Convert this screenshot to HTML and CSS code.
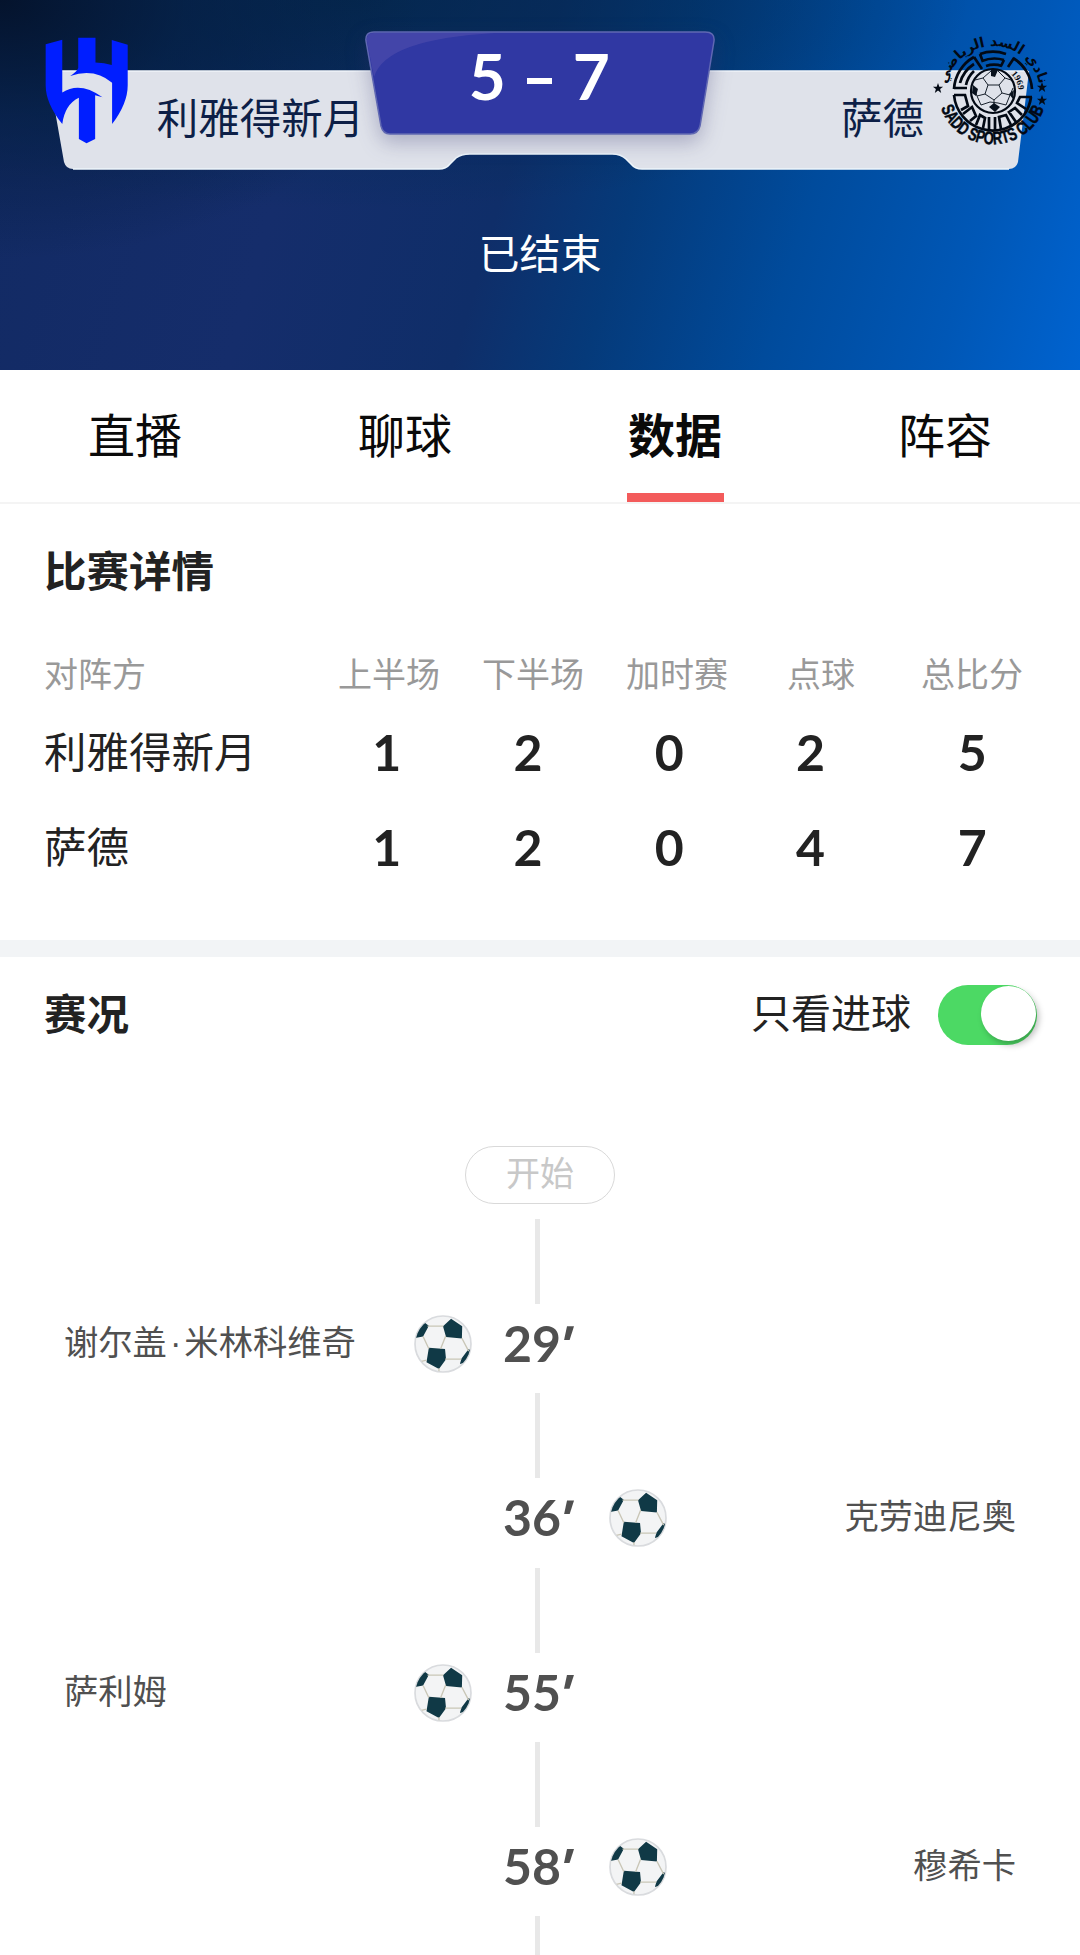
FILE: index.html
```
<!DOCTYPE html>
<html lang="zh-CN">
<head>
  <meta charset="utf-8" />
  <meta name="viewport" content="width=device-width, initial-scale=1" />
  <title>利雅得新月 5 - 7 萨德</title>
  <link rel="stylesheet" href="styles.css">
</head>
<body>
  <!-- shared football icon -->
  <svg class="defs" width="0" height="0">
    <defs>
      <clipPath id="ball-clip"><circle cx="128" cy="132" r="82" /></clipPath>
      <symbol id="ball" viewBox="42 46 172 172">
        <circle cx="128" cy="132" r="83" fill="#f3f4f5" stroke="#d9dbde" stroke-width="5" />
        <g clip-path="url(#ball-clip)">
          <path d="M70 66l16 12-17 32-24 4v-20z M152 57l33 22-1 37-47-5-9-32z M86 143l48 4 3 30-21 29-37-20z M204 147l8 6-10 32-24 6 5-16z" fill="#103946" />
          <path d="M82 79h47 M136 108l-15 38 M69 110l17 36 M184 115l20 38 M134 177h48 M116 204v16 M79 180l-18 4" fill="none" stroke="#c9c6b6" stroke-width="4" />
        </g>
      </symbol>
    </defs>
  </svg>

  <header class="hero">
    <div class="board">
      <svg class="board-bg" viewBox="0 0 980 106" width="980" height="106">
        <path d="M0 1H981L970 92Q968 99 961 99H594Q587 99 583 94L578 89Q573 84 564 84H422Q413 84 408 88L402 94Q398 99 391 99H25Q18 99 16 92Z" fill="#dfe2ea" />
        <path d="M961 99H594Q587 99 583 94L578 89Q573 84 564 84H422Q413 84 408 88L402 94Q398 99 391 99H25" fill="none" stroke="#eef6fc" stroke-width="1.5" />
        <path d="M0 1H980" stroke="#f0f5fa" stroke-width="1.5" />
      </svg>
      <svg class="crest" viewBox="45 50 252 322">
        <g fill="#001eff">
          <path d="M47 72L97 58V217Q150 182 218 231L196 225V357L170 370L147 357V233Q105 253 97 312Q47 250 47 195Z" />
          <path d="M145 52H197V127Q224 128 246 134V59L294 73V195Q294 250 247 312V188Q195 143 121 167Q143 152 145 143Z" />
        </g>
      </svg>
      <span class="team">利雅得新月</span>
      <div class="score">
        <svg class="score-bg" viewBox="0 0 350 104" width="350" height="104">
          <path d="M9 1H340Q350 1 349 10L335 95Q333 103 325 103H25Q18 103 16 95L1 10Q0 1 9 1Z" fill="#3038a3" stroke="#6068b2" stroke-width="1.5" />
          <path d="M9 2H130Q20 8 9 46L2 10Q1 2 9 2Z" fill="#4849aa" opacity=".8" />
        </svg>
        <b>5</b><i></i><b>7</b>
      </div>
      <span class="team away">萨德</span>
      <svg class="badge" viewBox="0 0 116 120">
        <defs>
          <path id="arc-top" d="M10 62A47 47 0 0 1 104 62" />
          <path id="arc-low" d="M4.500 76A55 55 0 0 0 108 78" />
          <path id="arc-year" d="M75 43A24 24 0 0 1 81 68" />
        </defs>
        <g fill="none" stroke="#020914" stroke-width="2.7">
          <circle cx="57" cy="60" r="22" stroke-width="2.2" />
          <!-- maze ring -->
          <path d="M18 58A39 39 0 0 1 38 26 M44 23A39 39 0 0 1 70 23 M77 27A39 39 0 0 1 96 58 M18 64A39 39 0 0 0 88 84 M95 66A39 39 0 0 1 88 84" />
          <path d="M24 52A33 33 0 0 1 38 33 M46 30A33 33 0 0 1 68 29 M30 54A27 27 0 0 1 38 40 M50 35A26 26 0 0 1 66 35 M18 57H31 M38 26L46 38 M68 29L65 35 M44 23L47 31 M78 27L72 36" />
          <path d="M18 64H29L32 75L25 79 M27 83L36 76L40 85L34 90 M40 94L44 84L49 87L47 97 M53 99V86 M59 99V86 M65 98L63 86L70 84L75 94 M80 91L73 81L79 77L86 84 M90 78L81 72L84 66H96" />
        </g>
        <g fill="none" stroke="#17202b" stroke-width="1">
          <path d="M52 54H63L66 62L58 69L49 63Z M52 54L47 47L55 40 M63 54L69 47L62 40 M66 62L74 64L77 57 M58 69V78 M49 63L41 65L38 57 M41 65L45 74 M74 64L70 74 M47 47L39 49 M69 47L75 49 M45 74L54 71L62 72L70 74" />
        </g>
        <path d="M55 39h7l-3 7-4-1z M37 54l5 4-2 7-4-3z M73 63l5-4-1 9z M53 76l5-4 6 4-5 5z" fill="#08111d" />
        <g fill="#020914">
          <text class="badge-ar"><textPath href="#arc-top" startOffset="50%">نادي السد الرياضي</textPath></text>
          <text class="badge-en"><textPath href="#arc-low" startOffset="1" textLength="134" lengthAdjust="spacingAndGlyphs">SADD SPORTS CLUB</textPath></text>
          <text class="badge-year"><textPath href="#arc-year">1969</textPath></text>
          <path id="star" d="M2 52l1.300 3.700h3.800l-3 2.400 1.100 3.800-3.200-2.300-3.200 2.300 1.100-3.800-3-2.400h3.800z" />
          <use href="#star" x="104" y="-1" />
          <use href="#star" x="104" y="12" />
        </g>
      </svg>
    </div>
    <p class="status">已结束</p>
  </header>

  <nav class="tabs">
    <a>直播</a>
    <a>聊球</a>
    <a class="active">数据</a>
    <a>阵容</a>
  </nav>

  <section class="detail">
    <h2>比赛详情</h2>
    <div class="row head">
      <span>对阵方</span><span>上半场</span><span>下半场</span><span>加时赛</span><span>点球</span><span>总比分</span>
    </div>
    <div class="row">
      <span>利雅得新月</span><b>1</b><b>2</b><b>0</b><b>2</b><b>5</b>
    </div>
    <div class="row">
      <span>萨德</span><b>1</b><b>2</b><b>0</b><b>4</b><b>7</b>
    </div>
  </section>

  <section class="events">
    <div class="events-head">
      <h2>赛况</h2>
      <span class="only-goals">只看进球</span>
      <span class="switch"></span>
    </div>
    <div class="timeline">
      <span class="start">开始</span>
      <span class="line"></span>
      <div class="event">
        <span class="name">谢尔盖<span class="dot">·</span>米林科维奇</span>
        <svg class="ball"><use href="#ball" /></svg>
        <b class="minute">29<i></i></b>
      </div>
      <span class="line"></span>
      <div class="event away">
        <b class="minute">36<i></i></b>
        <svg class="ball"><use href="#ball" /></svg>
        <span class="name">克劳迪尼奥</span>
      </div>
      <span class="line"></span>
      <div class="event">
        <span class="name">萨利姆</span>
        <svg class="ball"><use href="#ball" /></svg>
        <b class="minute">55<i></i></b>
      </div>
      <span class="line"></span>
      <div class="event away">
        <b class="minute">58<i></i></b>
        <svg class="ball"><use href="#ball" /></svg>
        <span class="name">穆希卡</span>
      </div>
      <span class="line"></span>
    </div>
  </section>
</body>
</html>
```
FILE: styles.css
```
* {
  box-sizing: border-box;
}
body {
  margin: 0;
  height: 1955px;
  overflow: hidden;
  background: #fff;
  color: #222;
  font-family: "Noto Sans CJK SC", sans-serif;
}
h2, p {
  margin: 0;
}
b, i {
  font-style: normal;
}
.defs {
  position: absolute;
}

/* hero */
.hero {
  height: 370px;
  padding-top: 31px;
  background:
    radial-gradient(ellipse 420px 260px at 0 0, rgba(4, 18, 42, 0.95) 0%, rgba(4, 28, 62, 0.6) 45%, rgba(4, 34, 74, 0) 100%),
    radial-gradient(ellipse 620px 210px at 350px 0, rgba(0, 38, 72, 0.8) 0%, rgba(0, 42, 84, 0.5) 50%, rgba(0, 48, 96, 0) 100%),
    linear-gradient(106deg, #122a63 0%, #152d6b 28%, #0f2e69 47%, #053a7a 58%, #004b9c 73%, #0057b6 88%, #0063d0 100%);
}
.board {
  position: relative;
  display: flex;
  height: 144px;
  padding: 0 28px 0 45px;
}
.board-bg {
  position: absolute;
  left: 48px;
  top: 39px;
  overflow: visible;
}
.crest {
  position: relative;
  width: 84px;
  height: 107px;
  margin-top: 6px;
}
.team {
  position: relative;
  width: 237px;
  padding-left: 28px;
  margin-top: 55px;
  font-size: 41.500px;
  line-height: 60px;
  color: #0d1f47;
  white-space: nowrap;
}
.team.away {
  width: 223px;
  padding: 0 12px 0 0;
  text-align: right;
}
.score {
  position: relative;
  display: flex;
  justify-content: center;
  gap: 21px;
  width: 350px;
  height: 104px;
  font-family: Lato, sans-serif;
  font-size: 64px;
  line-height: 90px;
  color: #fff;
}
.score-bg {
  position: absolute;
  left: 0;
  top: 0;
  filter: drop-shadow(0 8px 10px rgba(50, 50, 110, 0.3));
}
.score b {
  position: relative;
}
.score i {
  position: relative;
  width: 25px;
  height: 6px;
  margin-top: 47px;
  background: #fff;
}
.badge {
  position: relative;
  width: 116px;
  height: 120px;
  overflow: visible;
}
.badge-ar {
  font: bold 14px "DejaVu Sans", sans-serif;
  text-anchor: middle;
}
.badge-en {
  font: bold 18px "Liberation Sans Narrow", "Liberation Sans", sans-serif;
  stroke: #020914;
  stroke-width: 0.5px;
}
.badge-year {
  font: bold 9px "Liberation Serif", serif;
}
.status {
  margin-top: 46px;
  text-align: center;
  font-size: 41px;
  line-height: 60px;
  color: #fff;
}

/* tabs */
.tabs {
  display: grid;
  grid-template-columns: repeat(4, 1fr);
  justify-items: center;
  height: 134px;
  border-bottom: 2px solid #f4f4f4;
  font-size: 47px;
  line-height: 126px;
  color: #0a0a0a;
}
.tabs a {
  height: 132px;
}
.tabs .active {
  width: 97px;
  text-align: center;
  font-weight: bold;
  border-bottom: 9px solid #f35b5b;
}

/* score table */
.detail {
  height: 453px;
  padding: 34px 0 0 44px;
  border-bottom: 17px solid #f2f4f6;
}
h2 {
  font-size: 42.500px;
  line-height: 62px;
}
.row {
  display: grid;
  grid-template-columns: 272px repeat(4, 141.300px) 182px;
  text-align: center;
  font-size: 42.500px;
  line-height: 95px;
}
.row span:first-child {
  text-align: left;
}
.row:not(.head) span {
  margin-top: -3px;
}
.row.head {
  grid-template-columns: 273px repeat(4, 144px) 158px;
  margin-top: 48px;
  font-size: 34px;
  line-height: 50px;
  color: #999;
  margin-bottom: 7px;
}
.row b {
  height: 95px;
  font-family: Lato, sans-serif;
  font-size: 50px;
}

/* events */
.events-head {
  display: flex;
  align-items: center;
  height: 117px;
  padding: 0 43px 2px 44px;
}
.events-head h2 {
  margin-top: -5px;
}
.only-goals {
  margin: -8px 27px 0 auto;
  font-size: 40px;
}
.switch {
  width: 99px;
  height: 60px;
  padding: 1px 1px;
  border-radius: 30px;
  background: #4cd964;
}
.switch::after {
  content: "";
  display: block;
  width: 55px;
  height: 55px;
  margin-left: auto;
  border-radius: 50%;
  background: #fff;
  box-shadow: 3px 4px 6px rgba(0, 0, 0, 0.25);
}
.timeline {
  display: flex;
  flex-direction: column;
  align-items: center;
  padding-top: 72px;
}
.start {
  width: 150px;
  height: 58px;
  margin-bottom: 15px;
  border: 1.500px solid #d9d9d9;
  border-radius: 29px;
  text-align: center;
  font-size: 34px;
  line-height: 50px;
  color: #c8c8c8;
}
.line {
  flex: none;
  width: 5px;
  height: 85px;
  margin-right: 5px;
  background: #e8e8e8;
}
.event {
  display: flex;
  align-items: center;
  align-self: stretch;
  height: 89.300px;
  padding: 0 499px 9px 64px;
}
.event.away {
  padding: 0 64px 9px 503px;
}
.name {
  flex: 1;
  margin-top: -8px;
  font-family: "Liberation Sans", "Noto Sans CJK SC", sans-serif;
  font-size: 34.300px;
  color: #505050;
  white-space: nowrap;
}
.name .dot {
  margin: 0 3px;
}
.away .name {
  text-align: right;
}
.ball {
  width: 58px;
  height: 58px;
  margin-right: 31px;
}
.away .ball {
  margin: 0 0 0 28px;
}
.minute {
  display: flex;
  width: 78px;
  margin-top: -2px;
  font-family: Lato, sans-serif;
  font-size: 50px;
  color: #505050;
}
/* slanted minute mark */
.minute i {
  width: 10px;
  height: 14px;
  margin: 13px 0 0 3px;
  background: #505050;
  clip-path: polygon(30% 0, 100% 0, 55% 100%, 0 100%);
}
```
